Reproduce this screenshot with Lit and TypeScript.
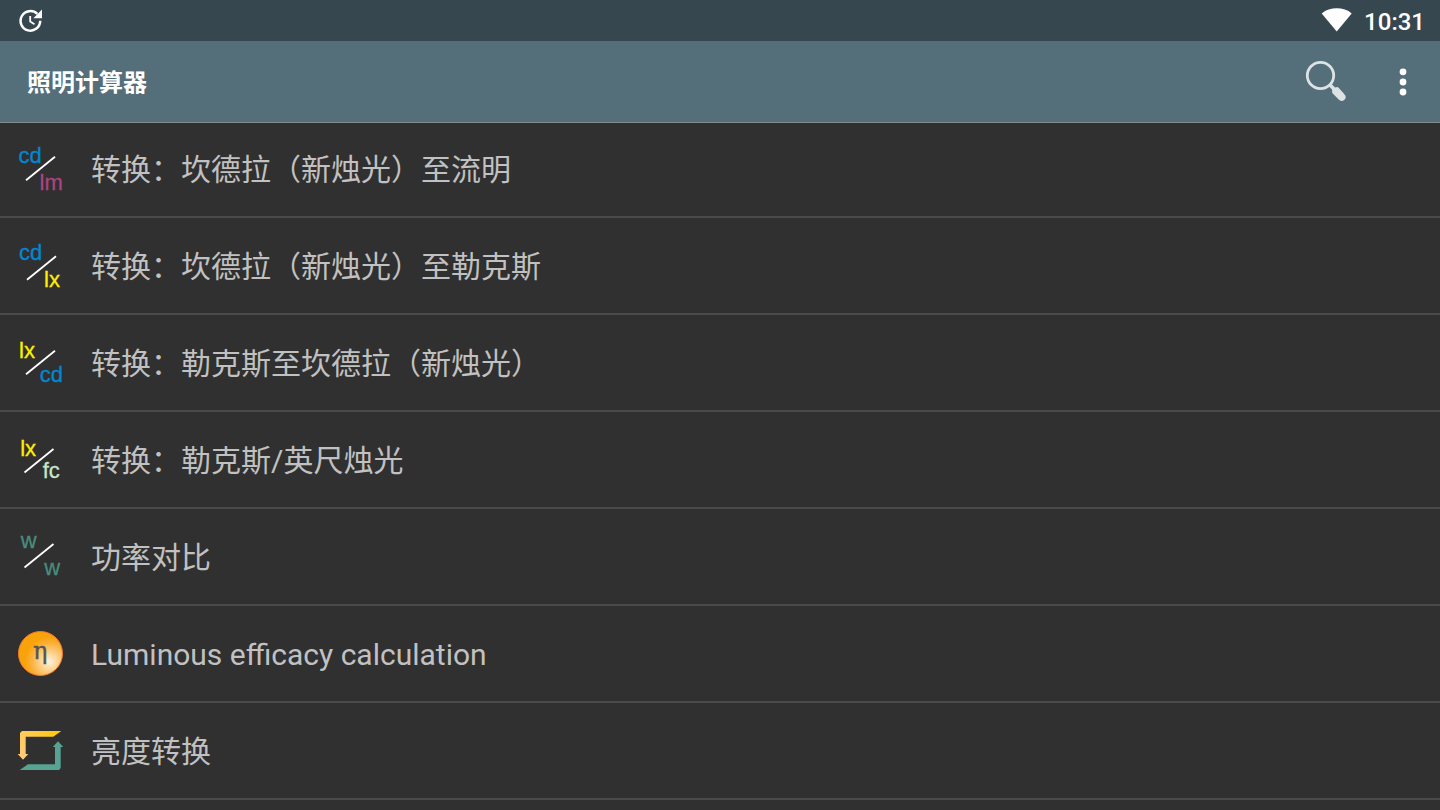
import { LitElement, html, svg, css } from "lit";
import { customElement } from "lit/decorators.js";

interface Label {
  text: string;
  color: string;
  x: number;
  y: number;
}

// Two unit names on either side of a slash.
const pair = (top: Label, bottom: Label, line: [number, number]) => svg`
  <line x1=${line[0]} y1=${line[1]} x2=${line[0] + 29} y2=${line[1] - 23.5} stroke="#fff" stroke-width="1.8" />
  <text class="unit" x=${top.x} y=${top.y} fill=${top.color} stroke=${top.color}>${top.text}</text>
  <text class="unit" x=${bottom.x} y=${bottom.y} fill=${bottom.color} stroke=${bottom.color}>${bottom.text}</text>
`;

const BLUE = "#0288d1";
const PINK = "#ab4580";
const YELLOW = "#ffee00";
const MINT = "#c8e6c9";
const GREEN = "#4a8c7d";

const efficacy = svg`
  <defs>
    <radialGradient id="glow" cx="0.7" cy="0.68" r="0.55">
      <stop offset="0" stop-color="#fff1dc" />
      <stop offset="0.3" stop-color="#fdd99e" />
      <stop offset="0.75" stop-color="#fbb03b" />
      <stop offset="1" stop-color="#f9a30a" />
    </radialGradient>
  </defs>
  <circle cx="23.5" cy="23.5" r="22" fill="url(#glow)" stroke="#f47a30" stroke-width="1" />
  <text class="eta" x="16" y="29" fill="#555" stroke="#555">η</text>
`;

const luminance = svg`
  <defs>
    <linearGradient id="gold" x1="0" y1="1" x2="1" y2="0">
      <stop offset="0" stop-color="#ffcc80" />
      <stop offset="0.5" stop-color="#ffca5a" />
      <stop offset="1" stop-color="#ffc800" />
    </linearGradient>
  </defs>
  <path fill="url(#gold)" d="M3 6L5 4H44.3L36.3 9.7H8.7V27H11.3L6 32.7L.7 27H3Z" />
  <path fill="#57a290" d="M2.7 43L11 37.3H38V20H35.7L41 14.3L46.3 20H43.7V41L42 43Z" />
`;

const ITEMS = [
  {
    title: "转换：坎德拉（新烛光）至流明",
    icon: pair({ text: "cd", color: BLUE, x: 1.5, y: 18 }, { text: "lm", color: PINK, x: 22.5, y: 45 }, [9, 35.3]),
  },
  {
    title: "转换：坎德拉（新烛光）至勒克斯",
    icon: pair({ text: "cd", color: BLUE, x: 2, y: 18 }, { text: "lx", color: YELLOW, x: 27, y: 44.7 }, [10, 37.7]),
  },
  {
    title: "转换：勒克斯至坎德拉（新烛光）",
    icon: pair({ text: "lx", color: YELLOW, x: 2, y: 19.3 }, { text: "cd", color: BLUE, x: 22.8, y: 43 }, [9, 35.3]),
  },
  {
    title: "转换：勒克斯/英尺烛光",
    icon: pair({ text: "lx", color: YELLOW, x: 3.2, y: 19.7 }, { text: "fc", color: MINT, x: 25.7, y: 42.3 }, [7.5, 36.5]),
  },
  {
    title: "功率对比",
    icon: pair({ text: "w", color: GREEN, x: 3.8, y: 15 }, { text: "w", color: GREEN, x: 27.3, y: 42 }, [7.5, 34.5]),
  },
  { title: "Luminous efficacy calculation", icon: efficacy },
  { title: "亮度转换", icon: luminance },
];

@customElement("app-root")
export class AppRoot extends LitElement {
  static styles = css`
    :host {
      display: flex;
      flex-direction: column;
      height: 100vh;
      overflow: hidden;
      background: #303030;
      color: #c1c1c1;
      font-family: Roboto, "Noto Sans CJK SC", sans-serif;
    }
    .status {
      display: flex;
      align-items: center;
      justify-content: space-between;
      box-sizing: border-box;
      flex: none;
      height: 41px;
      padding: 0 15px 0 18px;
      background: #37474f;
      color: #fff;
    }
    .status-end {
      display: flex;
      align-items: center;
      gap: 12px;
    }
    .clock {
      font-size: 24px;
      line-height: 28px;
      font-weight: 500;
      padding-top: 2px;
    }
    .bar {
      position: relative;
      z-index: 1;
      display: flex;
      align-items: center;
      box-sizing: border-box;
      flex: none;
      height: 82px;
      padding: 0 0 0 27px;
      background: #546e7a;
      border-bottom: 1px solid #858a8c;
    }
    .title {
      flex: 1;
      margin: 0;
      padding-top: 2px;
      color: #fff;
      font-size: 24px;
      line-height: 36px;
      font-weight: 700;
    }
    .action {
      display: grid;
      place-items: center;
      height: 81px;
      padding: 0;
      border: 0;
      background: none;
    }
    .search {
      width: 79px;
    }
    .more {
      width: 74px;
    }
    svg {
      display: block;
      flex: none;
      overflow: visible;
    }
    .list {
      flex: 1;
      min-height: 0;
      overflow: hidden;
      margin: -2px 0 0;
      padding: 0;
      list-style: none;
    }
    .item {
      border-bottom: 2px solid #4a4a4a;
    }
    .row {
      display: flex;
      align-items: center;
      gap: 27px;
      box-sizing: border-box;
      width: 100%;
      height: 95px;
      padding: 0 17px;
      border: 0;
      background: none;
      color: inherit;
      font: inherit;
      font-size: 30px;
      line-height: 44px;
      text-align: left;
    }
    .name {
      padding-top: 2px;
    }
    .unit {
      font-family: "Liberation Sans", sans-serif;
      font-size: 22px;
      stroke-width: 0.3px;
    }
    .eta {
      font-family: "DejaVu Serif", serif;
      font-size: 24px;
      stroke-width: 0.4px;
    }
  `;

  render() {
    return html`
      <div class="status">
        <svg width="26" height="27" viewBox="0 0 26 27" aria-hidden="true">
          <path d="M19.3 6.9A9.8 9.8 0 1 0 22.2 13.8" fill="none" stroke="#fff" stroke-width="2.5" />
          <path d="M24 2.5V11.2H15.4Z" fill="#fff" />
          <path d="M12.2 9V14.6L16.5 17.2" fill="none" stroke="#fff" stroke-width="1.8" />
        </svg>
        <div class="status-end">
          <svg width="30" height="25" viewBox="0 0 30 25" aria-hidden="true">
            <path d="M14.7 23.5L-.3 5.4C4 2 9 .3 14.7 .3S25.7 2 29.7 5.4Z" fill="#fff" />
          </svg>
          <span class="clock">10:31</span>
        </div>
      </div>
      <header class="bar">
        <h1 class="title">照明计算器</h1>
        <button class="action search" aria-label="搜索">
          <svg width="41" height="41" viewBox="0 0 41 41" aria-hidden="true">
            <circle cx="14.5" cy="14.5" r="13.2" fill="none" stroke="#dde2e4" stroke-width="2.8" />
            <path d="M23.5 23.5L28 28" stroke="#dde2e4" stroke-width="3.6" />
            <path d="M28.3 29L31 28.3L36.6 34.5Q38.4 36.2 36.9 37.3Q35.5 38.4 34 36.8L28.3 31Z" fill="#dde2e4" stroke="#dde2e4" stroke-width="4.4" stroke-linejoin="round" />
          </svg>
        </button>
        <button class="action more" aria-label="更多选项">
          <svg width="8" height="29" viewBox="0 0 8 29" aria-hidden="true" fill="#fff">
            <circle cx="4" cy="4.8" r="3.4" />
            <circle cx="4" cy="15" r="3.4" />
            <circle cx="4" cy="25" r="3.4" />
          </svg>
        </button>
      </header>
      <ul class="list">
        ${ITEMS.map(
          (item) => html`
            <li class="item">
              <button class="row">
                <svg width="47" height="47" viewBox="0 0 47 47" aria-hidden="true">${item.icon}</svg>
                <span class="name">${item.title}</span>
              </button>
            </li>
          `
        )}
      </ul>
    `;
  }
}
